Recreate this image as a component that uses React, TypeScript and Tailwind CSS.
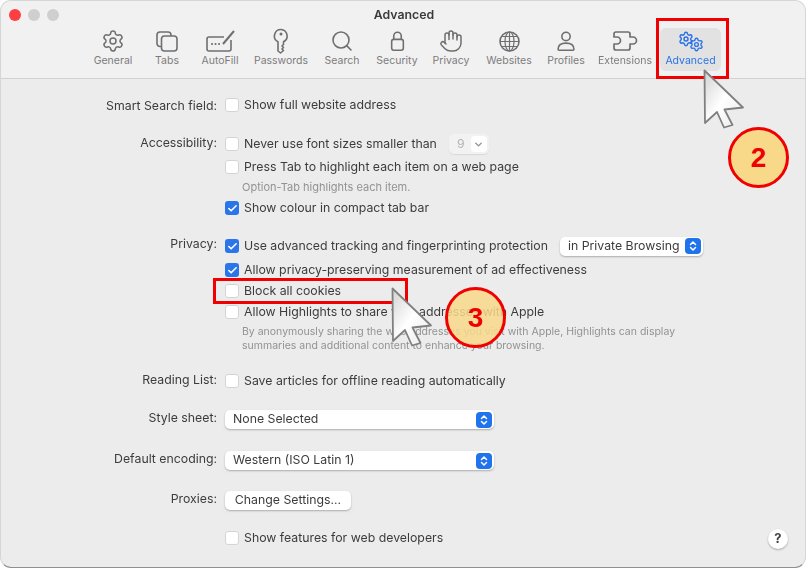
import { Check, ChevronDown, ChevronsUpDown, Hand, Search, Settings } from "lucide-react";
import type { ReactNode } from "react";

const TabsIcon = () => (
  <svg width="22" height="21" viewBox="0 0 22 21" fill="none" stroke="currentColor" strokeWidth="1.6">
    <path d="M5 15.500H4a3 3 0 0 1-3-3V4a3 3 0 0 1 3-3h8a3 3 0 0 1 3 3v1" />
    <rect x="5.500" y="5" width="15.500" height="15" rx="3" />
  </svg>
);

const AutoFillIcon = () => (
  <svg width="29" height="22" viewBox="0 0 29 22" fill="none" stroke="currentColor" strokeWidth="1.6">
    <path d="M18 7H3a2 2 0 0 0-2 2v10a2 2 0 0 0 2 2h20a2 2 0 0 0 2-2v-9" />
    <path d="M17 14 28 1" strokeWidth="2" />
    <path d="M6 14h.1M9.500 14h.1M13 14h.1" strokeWidth="2" strokeLinecap="round" />
  </svg>
);

const KeyIcon = () => (
  <svg width="18" height="26" viewBox="0 0 18 26" fill="none" stroke="currentColor" strokeWidth="1.6" strokeLinejoin="round">
    <path d="M9 1.500a6.500 6.500 0 0 0-3 12.300V23l2.500 2 3-2.500-1.500-1.500 1.500-1.500-1.500-1.500 1.500-1.500V13.800A6.500 6.500 0 0 0 9 1.500Z" />
    <circle cx="9" cy="6" r="1.500" fill="currentColor" stroke="none" />
  </svg>
);

const LockIcon = () => (
  <svg width="15" height="22" viewBox="0 0 18 26" fill="none" stroke="currentColor" strokeWidth="1.900">
    <rect x="2" y="11" width="14" height="13" rx="2.500" />
    <path d="M4.500 11V7a4.500 4.500 0 0 1 9 0v4" />
  </svg>
);

const GlobeIcon = () => (
  <svg width="21" height="21" viewBox="0 0 21 21" fill="none" stroke="currentColor" strokeWidth="1.200">
    <circle cx="10.500" cy="10.500" r="9.500" strokeWidth="1.600" />
    <ellipse cx="10.500" cy="10.500" rx="4.500" ry="9.500" />
    <path d="M10.500 1v19M1 10.500h19M2.500 5.500h16M2.500 15.500h16" />
  </svg>
);

const ProfileIcon = () => (
  <svg width="20" height="22" viewBox="0 0 24 26" fill="none" stroke="currentColor" strokeWidth="1.900">
    <circle cx="12" cy="7.500" r="5" />
    <path d="M2.500 23c0-5 4-7.500 9.500-7.500s9.500 2.500 9.500 7.500c0 .6-.4 1-1 1H3.500c-.6 0-1-.4-1-1Z" />
  </svg>
);

// rounded outline with a notch on the left and a knob on the right
const PuzzleIcon = () => (
  <svg width="26" height="22" viewBox="0 0 26 22" fill="none" stroke="currentColor" strokeWidth="1.700" strokeLinejoin="round">
    <path d="M4 2h12a2 2 0 0 1 2 2v3h3a3.500 3.500 0 0 1 0 7h-3v4a2 2 0 0 1-2 2H4a2 2 0 0 1-2-2v-4h3a3.500 3.500 0 0 0 0-7H2V4a2 2 0 0 1 2-2Z" />
  </svg>
);

const GearsIcon = () => (
  <div className="relative h-[21px] w-[26px] text-[#2a72e6]">
    <Settings size={16} strokeWidth={2.2} className="absolute left-0 top-0" />
    <Settings size={15} strokeWidth={2.2} className="absolute bottom-0 right-0" />
  </div>
);

const tabs: { label: string; width: string; icon: ReactNode }[] = [
  { label: "General", width: "w-[54px]", icon: <Settings size={24} strokeWidth={1.5} /> },
  { label: "Tabs", width: "w-[54px]", icon: <TabsIcon /> },
  { label: "AutoFill", width: "w-[52px]", icon: <AutoFillIcon /> },
  { label: "Passwords", width: "w-[70px]", icon: <KeyIcon /> },
  { label: "Search", width: "w-[52px]", icon: <Search size={24} strokeWidth={1.6} /> },
  { label: "Security", width: "w-[58px]", icon: <LockIcon /> },
  { label: "Privacy", width: "w-[50px]", icon: <Hand size={24} strokeWidth={1.5} /> },
  { label: "Websites", width: "w-[66px]", icon: <GlobeIcon /> },
  { label: "Profiles", width: "w-[48px]", icon: <ProfileIcon /> },
  { label: "Extensions", width: "w-[70px]", icon: <PuzzleIcon /> },
];

const Box = ({ checked = false }: { checked?: boolean }) =>
  checked ? (
    <span className="flex h-[14px] w-[14px] shrink-0 items-center justify-center rounded-[3px] bg-[#2a75ea] text-white">
      <Check size={11} strokeWidth={3.5} />
    </span>
  ) : (
    <span className="h-[14px] w-[14px] shrink-0 rounded-[3px] border border-[#d4d4d4] bg-white" />
  );

const CheckRow = ({ text, checked, className = "" }: { text: string; checked?: boolean; className?: string }) => (
  <div className={`flex h-5 items-center gap-[5px] ${className}`}>
    <Box checked={checked} />
    <span>{text}</span>
  </div>
);

const Section = ({
  label,
  className = "",
  labelClass = "leading-[17px]",
  children,
}: {
  label?: string;
  className?: string;
  labelClass?: string;
  children: ReactNode;
}) => (
  <div className={`flex gap-2 ${className}`}>
    <div className={`h-5 w-[216px] shrink-0 text-right ${labelClass}`}>{label}</div>
    <div className="flex flex-1 flex-col">{children}</div>
  </div>
);

const Select = ({ text, className }: { text: string; className: string }) => (
  <div className={`flex h-[19px] items-center justify-between rounded-[5px] bg-white pl-2 pr-[2px] shadow-[0_1px_2px_rgba(0,0,0,0.28)] ${className}`}>
    <span>{text}</span>
    <span className="flex h-4 w-4 items-center justify-center rounded-[4px] bg-[#1f74ec] text-white">
      <ChevronsUpDown size={12} strokeWidth={3} />
    </span>
  </div>
);

const Cursor = ({ className }: { className: string }) => (
  <svg width="42" height="60" viewBox="0 0 42 60" className={`absolute ${className}`}>
    <defs>
      <linearGradient id="cursorFill" x1="0" y1="0" x2="1" y2="1">
        <stop offset="0" stopColor="#d2d2d2" />
        <stop offset="0.5" stopColor="#ffffff" />
        <stop offset="1" stopColor="#e8e8e8" />
      </linearGradient>
    </defs>
    <path
      d="M1.500 1.500 40 38.500 21.500 40.500 29.500 56 21 58.500 14 43 2 54Z"
      fill="url(#cursorFill)"
      stroke="#808080"
      strokeWidth="1.800"
      strokeLinejoin="round"
    />
  </svg>
);

const Badge = ({ n, className }: { n: string; className: string }) => (
  <div className={`absolute flex h-[61px] w-[61px] items-center justify-center rounded-full border-[3px] border-[#f00000] font-['Liberation_Sans',sans-serif] text-[28px] font-bold text-[#f00000] ${className}`}>
    {n}
  </div>
);

export default function App() {
  return (
    <div className="relative h-[570px] w-[809px] overflow-hidden bg-white font-['Inter',sans-serif] text-[12.3px] text-[#3c3c3c]">
      <div className="flex h-[568px] w-[806px] flex-col overflow-hidden rounded-[11px] border border-[#d6d6d6] border-b-[#8f8f8f] bg-[#ececec] blur-[0.4px]">
        <header className="h-[78px] shrink-0 border-b border-[#d2d2d2] bg-[#f2f1f1]">
          <div className="relative h-[27px]">
            <div className="flex gap-[7px] pl-[8px] pt-[8px]">
              <span className="h-3 w-3 rounded-full bg-[#fc3f43]" />
              <span className="h-3 w-3 rounded-full bg-[#cfcfcf]" />
              <span className="h-3 w-3 rounded-full bg-[#cfcfcf]" />
            </div>
            <div className="absolute inset-x-0 top-[5px] pl-[2px] text-center text-[12.3px] font-semibold text-[#3a3a3a]">Advanced</div>
          </div>
          <nav className="flex pl-[85px] text-[#6f6f6f]">
            {tabs.map((t) => (
              <div key={t.label} className={`flex h-[43px] flex-col items-center ${t.width}`}>
                <div className="flex h-[26px] items-center">{t.icon}</div>
                <span className="text-[10.5px] leading-[14px] text-[#7c7c7c]">{t.label}</span>
              </div>
            ))}
            <div className="flex h-[43px] w-[61px] flex-col items-center rounded-[6px] bg-[#e2e2e2]">
              <div className="flex h-[26px] items-center"><GearsIcon /></div>
              <span className="text-[10.5px] leading-[14px] text-[#2a72e6]">Advanced</span>
            </div>
          </nav>
        </header>

        <main className="flex flex-col">
          <Section label="Smart Search field:" className="mt-4" labelClass="leading-[21px]">
            <CheckRow text="Show full website address" />
          </Section>

          <Section label="Accessibility:" className="mt-[19px]">
            <div className="flex h-5 items-center">
              <Box />
              <span className="ml-[5px]">Never use font sizes smaller than</span>
              <div className="ml-3 flex h-5 w-10 items-center justify-between rounded-[5px] bg-[#f2f2f2] pl-2 pr-[2px] text-[#b5b5b5] shadow-[0_1px_1px_rgba(0,0,0,0.08)]">
                9
                <span className="flex h-4 w-4 items-center justify-center rounded-[4px] bg-white text-[#8f8f8f]">
                  <ChevronDown size={11} strokeWidth={3} />
                </span>
              </div>
            </div>
            <CheckRow text="Press Tab to highlight each item on a web page" className="mt-[3px]" />
            <p className="mt-[2px] h-4 pl-[17px] text-[11px] leading-4 text-[#929292]">Option-Tab highlights each item.</p>
            <CheckRow text="Show colour in compact tab bar" checked className="mt-[3px]" />
          </Section>

          <Section label="Privacy:" className="mt-[18px]" labelClass="leading-4">
            <div className="flex h-5 items-center">
              <Box checked />
              <span className="ml-[5px]">Use advanced tracking and fingerprinting protection</span>
              <Select text="in Private Browsing" className="ml-3 w-[143px]" />
            </div>
            <CheckRow text="Allow privacy-preserving measurement of ad effectiveness" checked className="mt-1" />
            <CheckRow text="Block all cookies" className="mt-px" />
            <CheckRow text="Allow Highlights to share web addresses with Apple" className="mt-px" />
            <p className="mt-[3px] h-[27px] w-[460px] pl-[17px] text-[10.5px] leading-[13.5px] text-[#929292]">
              By anonymously sharing the web addresses you visit with Apple, Highlights can display summaries and additional content to enhance your browsing.
            </p>
          </Section>

          <Section label="Reading List:" className="mt-[19px]" labelClass="leading-[18px]">
            <CheckRow text="Save articles for offline reading automatically" />
          </Section>

          <Section label="Style sheet:" className="mt-[19px]" labelClass="leading-4">
            <Select text="None Selected" className="w-[269px]" />
          </Section>

          <Section label="Default encoding:" className="mt-[21px]" labelClass="leading-4">
            <Select text="Western (ISO Latin 1)" className="w-[269px]" />
          </Section>

          <Section label="Proxies:" className="mt-5" labelClass="leading-4">
            <button className="h-[19px] w-[126px] rounded-[5px] bg-white shadow-[0_1px_2px_rgba(0,0,0,0.28)]">Change Settings...</button>
          </Section>

          <Section className="mt-[17px]">
            <CheckRow text="Show features for web developers" />
          </Section>
        </main>
      </div>

      <button className="absolute left-[768px] top-[529px] flex h-5 w-5 items-center justify-center rounded-full bg-white text-[13px] font-bold text-[#444] shadow-[0_1px_2px_rgba(0,0,0,0.3)]">?</button>

      <div className="absolute left-[656px] top-[18px] h-[61px] w-[73px] border-[3px] border-[#f00000]" />
      <div className="absolute left-[213px] top-[278px] h-[26px] w-[195px] border-[3px] border-[#f00000]" />

      <Cursor className="left-[703px] top-[69px]" />
      <Cursor className="left-[391px] top-[287px]" />

      <Badge n="2" className="left-[728px] top-[127px] bg-[#f8d98a]" />
      <Badge n="3" className="left-[445px] top-[287px] bg-[#f8d98a]/85" />
    </div>
  );
}
